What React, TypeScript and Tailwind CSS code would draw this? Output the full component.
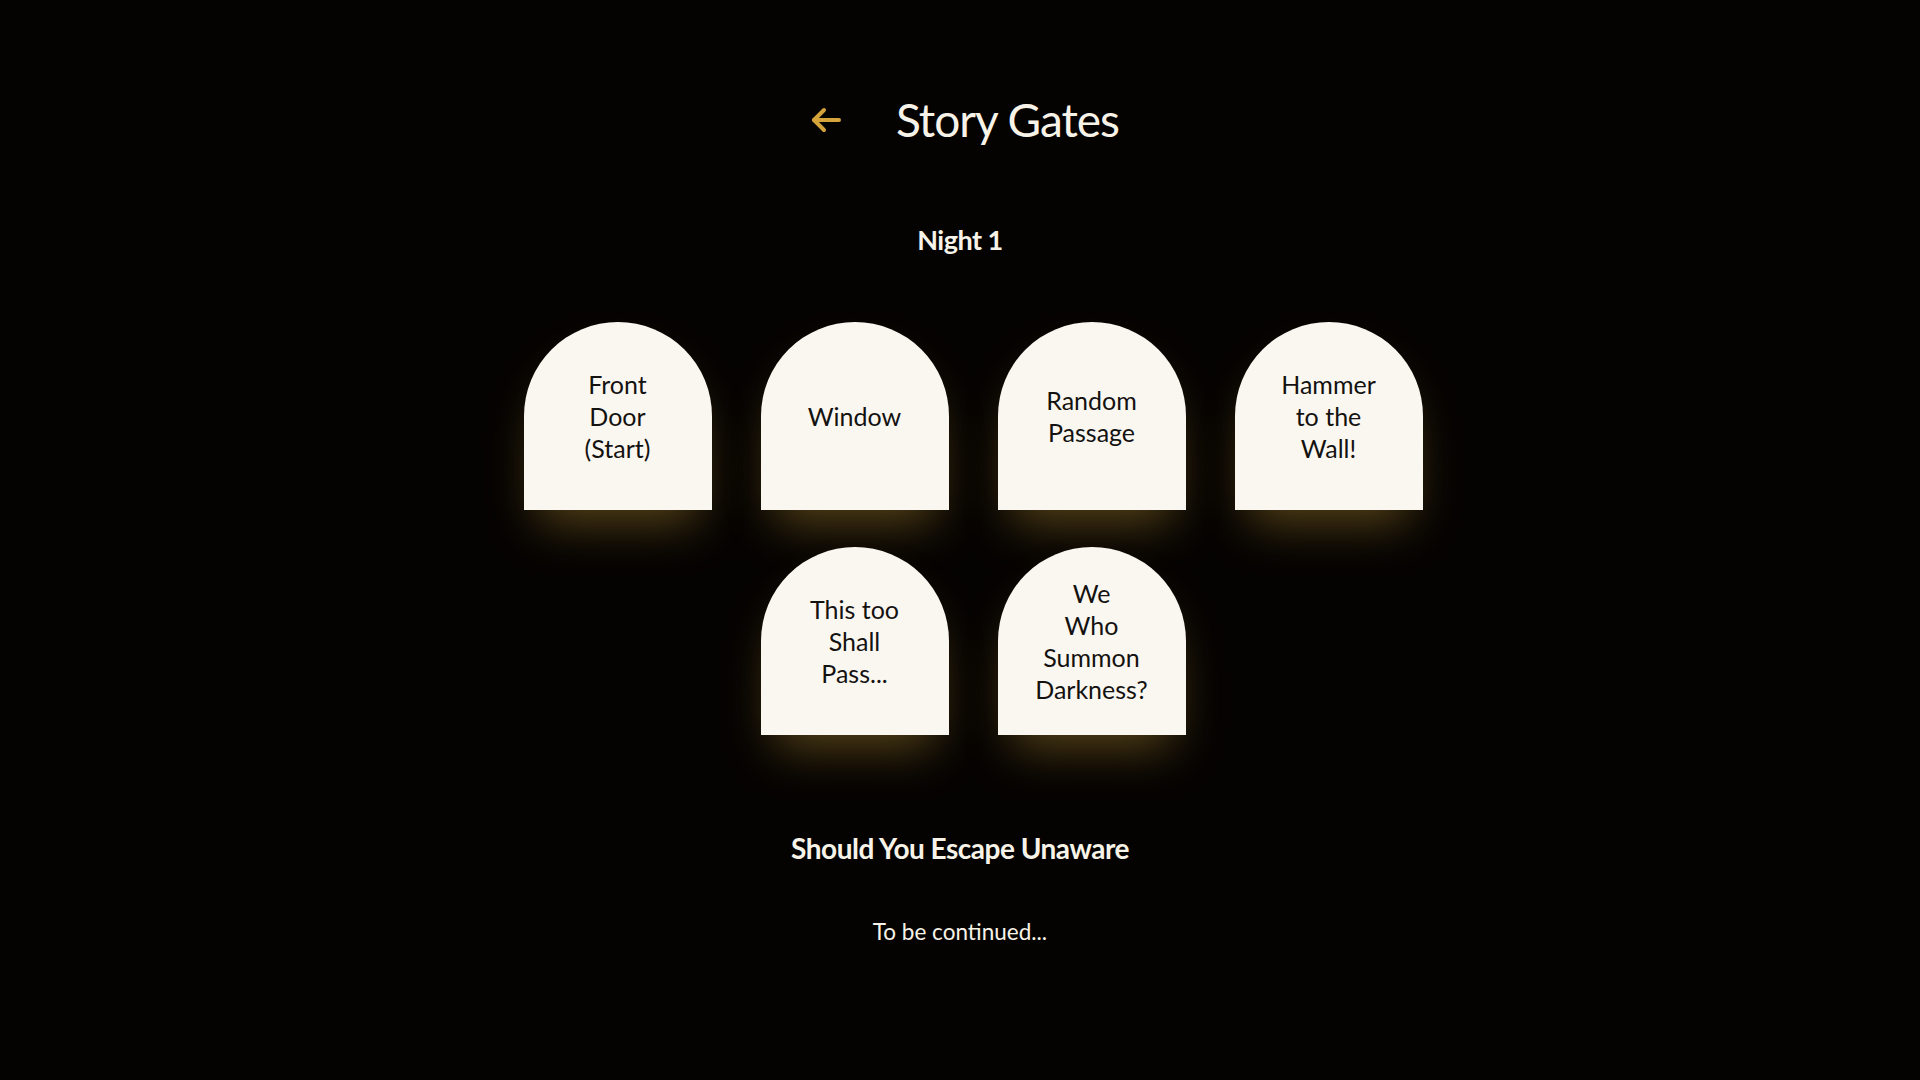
import React from "react";

const gates: string[][] = [
  ["Front", "Door", "(Start)"],
  ["Window"],
  ["Random", "Passage"],
  ["Hammer", "to the", "Wall!"],
  ["This too", "Shall", "Pass..."],
  ["We", "Who", "Summon", "Darkness?"],
];

function Gate({ lines }: { lines: string[] }) {
  return (
    <div className="w-[188px] h-[188px] rounded-t-full bg-[#faf7f0] flex flex-col items-center justify-center text-center text-[#141210] text-[25px] leading-[32px] shadow-[0_26px_48px_-14px_rgba(214,168,60,0.4)]">
      {lines.map((l, i) => (
        <span key={i} className="block">
          {l}
        </span>
      ))}
    </div>
  );
}

export default function App() {
  return (
    <div
      className="min-h-[1080px] w-full bg-[#050302] text-[#f8f3e8] flex flex-col items-center"
      style={{ fontFamily: "Lato, 'Open Sans', sans-serif" }}
    >
      <div className="pt-[90px] h-[150px] flex items-center justify-center gap-[55px] pl-[10px]">
        <svg width="30" height="26" viewBox="0 0 30 26" fill="none" stroke="#d4a33a" strokeWidth="4" strokeLinecap="round" strokeLinejoin="round">
          <path d="M28 13H3" />
          <path d="M13 3L3 13L13 23" />
        </svg>
        <h1 className="text-[46px] leading-[60px] font-normal tracking-[-1px]">Story Gates</h1>
      </div>
      <h2 className="mt-[70px] h-[40px] text-[27px] leading-[40px] font-bold tracking-[-0.5px]">Night 1</h2>
      <div className="mt-[62px] w-full flex justify-center pl-[26px]">
        <div className="w-[900px] flex flex-wrap justify-center gap-x-[49px] gap-y-[37px]">
          {gates.map((g, i) => (
            <Gate key={i} lines={g} />
          ))}
        </div>
      </div>
      <h2 className="mt-[93px] h-[40px] text-[28px] leading-[40px] font-bold tracking-[-0.5px]">Should You Escape Unaware</h2>
      <p className="mt-[48px] text-[22.5px] leading-[32px]">To be continued...</p>
    </div>
  );
}
